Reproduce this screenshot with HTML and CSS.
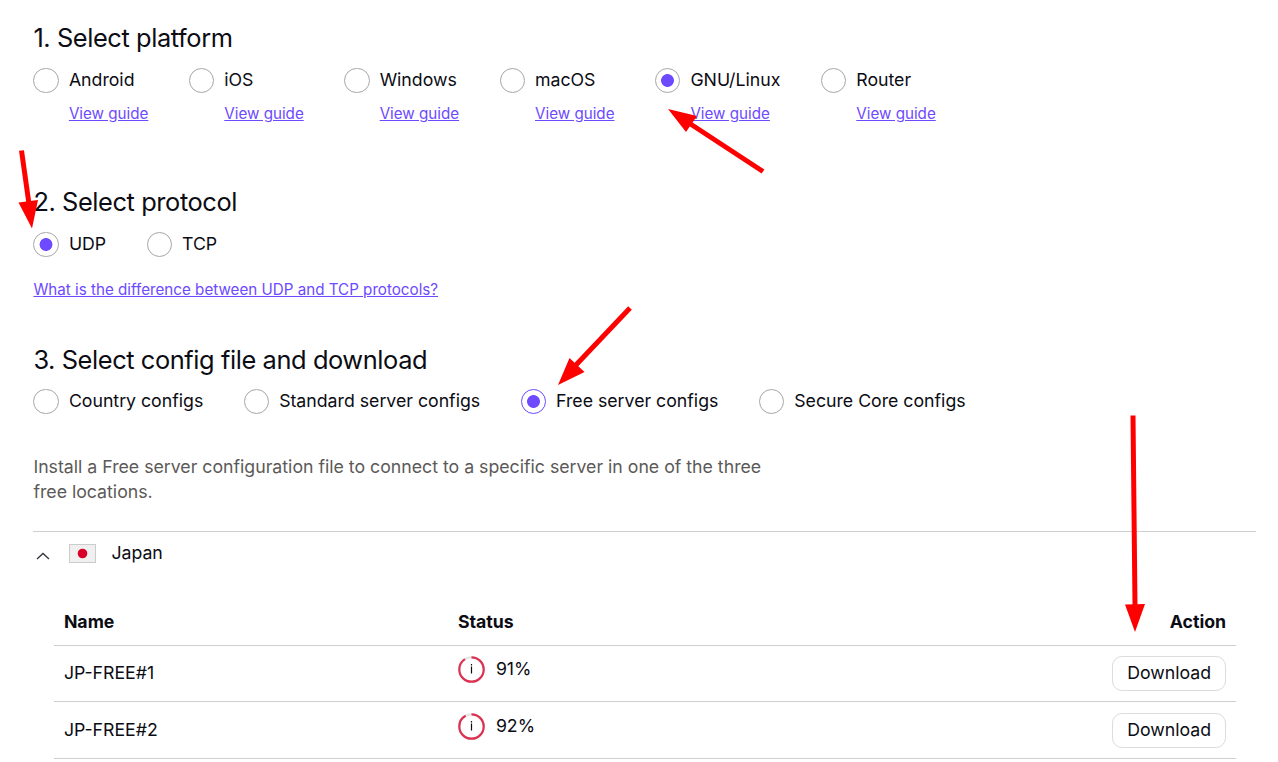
FILE: index.html
```
<!DOCTYPE html>
<html lang="en">
<head>
<meta charset="utf-8">
<title>OpenVPN configuration files</title>
<link rel="stylesheet" href="styles.css">
</head>
<body>
<main class="page">
  <section class="step step-platform">
    <h2 class="title">1. Select platform</h2>
    <div class="options">
      <div class="option"><label class="choice"><span class="radio"></span><span class="label">Android</span></label><a class="link guide" href="#">View guide</a></div>
      <div class="option"><label class="choice"><span class="radio"></span><span class="label">iOS</span></label><a class="link guide" href="#">View guide</a></div>
      <div class="option"><label class="choice"><span class="radio"></span><span class="label">Windows</span></label><a class="link guide" href="#">View guide</a></div>
      <div class="option"><label class="choice"><span class="radio"></span><span class="label">macOS</span></label><a class="link guide" href="#">View guide</a></div>
      <div class="option"><label class="choice"><span class="radio checked"></span><span class="label">GNU/Linux</span></label><a class="link guide" href="#">View guide</a></div>
      <div class="option"><label class="choice"><span class="radio"></span><span class="label">Router</span></label><a class="link guide" href="#">View guide</a></div>
    </div>
  </section>

  <section class="step step-protocol">
    <h2 class="title">2. Select protocol</h2>
    <div class="options">
      <label class="choice"><span class="radio checked"></span><span class="label">UDP</span></label>
      <label class="choice"><span class="radio"></span><span class="label">TCP</span></label>
    </div>
    <a class="link help" href="#">What is the difference between UDP and TCP protocols?</a>
  </section>

  <section class="step step-config">
    <h2 class="title">3. Select config file and download</h2>
    <div class="options">
      <label class="choice"><span class="radio"></span><span class="label">Country configs</span></label>
      <label class="choice"><span class="radio"></span><span class="label">Standard server configs</span></label>
      <label class="choice"><span class="radio checked focused"></span><span class="label">Free server configs</span></label>
      <label class="choice"><span class="radio"></span><span class="label">Secure Core configs</span></label>
    </div>
    <p class="note">Install a Free server configuration file to connect to a specific server in one of the three free locations.</p>
  </section>

  <section class="country">
    <div class="summary">
      <svg class="chevron" viewBox="0 0 14 8"><path d="M1 7 7 1.4 13 7"/></svg>
      <svg class="flag" viewBox="0 0 27 19"><rect x=".5" y=".5" width="26" height="18" fill="#f0f0f0" stroke="#ccc"/><circle cx="13.5" cy="9.5" r="4.8" fill="#d80027"/></svg>
      <span class="label">Japan</span>
    </div>
    <table class="servers">
      <thead><tr><th class="name">Name</th><th class="status">Status</th><th class="action">Action</th></tr></thead>
      <tbody>
        <tr><td>JP-FREE#1</td><td><div class="load"><svg class="ring" viewBox="0 0 27 27"><circle class="track" cx="13.5" cy="13.5" r="12.2"/><circle class="value" cx="13.5" cy="13.5" r="12.2" pathLength="100" stroke-dasharray="91 9"/><path class="info" d="M13.5 10.500v7M13.5 8v1.5"/></svg><span>91%</span></div></td><td class="action"><button class="button">Download</button></td></tr>
        <tr><td>JP-FREE#2</td><td><div class="load"><svg class="ring" viewBox="0 0 27 27"><circle class="track" cx="13.5" cy="13.5" r="12.2"/><circle class="value" cx="13.5" cy="13.5" r="12.2" pathLength="100" stroke-dasharray="92 8"/><path class="info" d="M13.5 10.500v7M13.5 8v1.5"/></svg><span>92%</span></div></td><td class="action"><button class="button">Download</button></td></tr>
      </tbody>
    </table>
  </section>
</main>

<svg class="arrows" viewBox="0 0 1278 762">
  <path class="shaft" d="M763 171.500 689 123M21.500 150.500 29 204M630 308 575 366M1133 415.500 1135 606"/>
  <path class="head" d="M668 109 697 116 686 132ZM32 228.500 18.500 202.500 38 200ZM558 385 569.500 358 584.500 372ZM1135 632 1125 604.500 1145 604Z"/>
</svg>
</body>
</html>
```
FILE: styles.css
```
* { box-sizing: border-box; }
body {
  margin: 0;
  background: #fff;
  color: #0c0c14;
  font: 17.72px/25.4px Inter, "Liberation Sans", sans-serif;
}
.page {
  width: 1278px;
  height: 762px;
  overflow: hidden;
  padding: 19px 22px 0 33.4px;
}
.title {
  margin: 0;
  height: 38px;
  font-size: 25.4px;
  line-height: 38px;
  font-weight: 400;
  letter-spacing: -0.41px;
}
.step-platform { height: 164px; }
.step-protocol { height: 158px; }
.step-config { height: 190px; }
.step-config .options { padding-top: 9px; }
.options {
  display: flex;
  gap: 40.4px;
  padding-top: 10px;
}
.choice {
  display: flex;
  gap: 10.1px;
  height: 26px;
  white-space: nowrap;
}
.radio {
  flex: none;
  width: 25.4px;
  height: 25.4px;
  margin-top: 1px;
  border: 1px solid #a7a7ab;
  border-radius: 50%;
}
.radio.checked { background: radial-gradient(circle, #6d4aff 6px, transparent 6.8px); }
.radio.focused { border-color: #6d4aff; }
.link {
  color: #6d4aff;
  font-size: 15.18px;
  text-decoration: underline;
}
.guide {
  display: block;
  margin: 8px 0 0 35.5px;
}
.help {
  display: block;
  margin-top: 20px;
}
.note {
  width: 762px;
  margin: 40px 0 0;
  color: #5c5958;
}
.country { border-top: 1px solid #d1cfcd; }
.summary {
  display: flex;
  height: 60px;
  padding: 8px 0 0 2.6px;
}
.chevron {
  width: 14px;
  height: 8px;
  margin: 12px 19px 0 0;
  fill: none;
  stroke: #35343b;
  stroke-width: 1.3;
}
.flag {
  width: 27px;
  height: 19px;
  margin: 4px 15.400px 0 0;
}
.servers {
  width: 1182px;
  margin-left: 20.2px;
  border-collapse: separate;
  border-spacing: 0;
  table-layout: fixed;
}
.servers th, .servers td {
  height: 57px;
  padding: 0 9.5px 0 10.3px;
  border-bottom: 1px solid #d1cfcd;
  text-align: left;
  vertical-align: middle;
}
.servers th {
  height: 54px;
  padding-top: 7px;
  font-weight: 700;
}
.servers tr:first-child td { height: 56px; padding-bottom: 1px; }
.name, .status { width: 394px; }
.servers .action { text-align: right; }
.load {
  display: flex;
  gap: 11px;
  margin-bottom: 8px;
}
.ring {
  width: 27px;
  height: 27px;
  fill: none;
}
.track { stroke: #e5e5e5; stroke-width: 2.2; }
.value {
  stroke: #dc3251;
  stroke-width: 2.2;
  transform: rotate(-90deg);
  transform-origin: center;
}
.info { stroke: #0c0c14; stroke-width: 1.2; }
.button {
  display: inline-block;
  width: 114px;
  height: 35px;
  padding: 0;
  background: #fff;
  border: 1px solid #dedbd9;
  border-radius: 10px;
  color: inherit;
  font: inherit;
  vertical-align: middle;
}
.arrows {
  position: absolute;
  inset: 0;
  width: 1278px;
  height: 762px;
  pointer-events: none;
}
.shaft { stroke: #f00; stroke-width: 5; }
.head { fill: #f00; }
```
